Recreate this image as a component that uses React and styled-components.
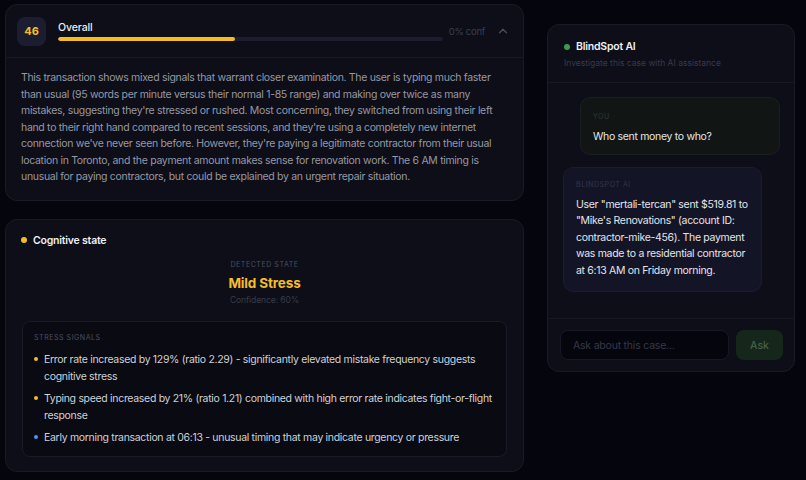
import React from "react";
import styled, { createGlobalStyle } from "styled-components";

const GlobalStyle = createGlobalStyle`
  html, body {
    margin: 0;
    padding: 0;
    background: #05050d;
  }
  body {
    font-family: Inter, "Noto Sans", sans-serif;
    -webkit-font-smoothing: antialiased;
  }
`;

const Page = styled.div`
  display: flex;
  align-items: flex-start;
  gap: 23px;
  padding: 4px 11px 10px 5px;
  width: 806px;
  height: 480px;
  box-sizing: border-box;
  overflow: hidden;
`;

const LeftColumn = styled.div`
  width: 519px;
  display: flex;
  flex-direction: column;
  gap: 18px;
`;

const Card = styled.section`
  background: #0d0e17;
  border: 1px solid #1a1b27;
  border-radius: 12px;
  box-sizing: border-box;
`;

const OverallHeader = styled.div`
  display: flex;
  align-items: center;
  height: 52px;
  padding: 0 13px 0 11px;
  border-bottom: 1px solid #181924;
`;

const ScoreBadge = styled.div`
  width: 29px;
  height: 29px;
  border-radius: 8px;
  background: #1c1d31;
  color: #f5bd2a;
  font-weight: 700;
  font-size: 11px;
  display: flex;
  align-items: center;
  justify-content: center;
  flex-shrink: 0;
`;

const OverallMain = styled.div`
  flex: 1;
  margin-left: 12px;
  display: flex;
  flex-direction: column;
  gap: 3px;
`;

const OverallLabel = styled.div`
  color: #eceef3;
  font-size: 10.5px;
  font-weight: 500;
  line-height: 13px;
  letter-spacing: -0.01em;
`;

const Track = styled.div`
  height: 4px;
  width: 385px;
  border-radius: 2px;
  background: #1c1d2e;
  overflow: hidden;
`;

const Fill = styled.div`
  height: 100%;
  border-radius: 2px;
  background: #f5bd1c;
`;

const Conf = styled.span`
  color: #3c3e4f;
  font-size: 9.5px;
  letter-spacing: -0.03em;
  margin-right: 11px;
`;

const Chevron = styled.svg`
  width: 14px;
  height: 14px;
  color: #4a4c5c;
`;

const Summary = styled.p`
  margin: 0;
  padding: 12px 14px 14px 15px;
  color: #9698a6;
  font-size: 10.5px;
  line-height: 16.5px;
  letter-spacing: -0.03em;
`;

const StateCard = styled(Card)`
  padding: 14px 15px 14px 15px;
`;

const SectionTitle = styled.div`
  display: flex;
  align-items: center;
  gap: 6px;
  color: #eceef3;
  font-size: 10.5px;
  font-weight: 600;
  letter-spacing: -0.02em;
`;

const Dot = styled.span`
  width: ${(p) => p.size || 6}px;
  height: ${(p) => p.size || 6}px;
  border-radius: 50%;
  background: ${(p) => p.color};
  flex-shrink: 0;
`;

const Detected = styled.div`
  display: flex;
  flex-direction: column;
  align-items: center;
  margin-top: 13px;
`;

const TinyLabel = styled.div`
  color: #4d4f60;
  font-size: 7px;
  letter-spacing: 0.08em;
  text-transform: uppercase;
  line-height: 10px;
`;

const StateName = styled.div`
  color: #f5bd2a;
  font-size: 13.5px;
  font-weight: 700;
  margin-top: 5px;
  line-height: 17px;
  letter-spacing: -0.01em;
`;

const StateConf = styled.div`
  color: #3a3c4c;
  font-size: 8.5px;
  margin-top: 3px;
  letter-spacing: -0.01em;
`;

const SignalsBox = styled.div`
  margin: 16px 1px 0;
  background: #090a12;
  border: 1px solid #1a1b27;
  border-radius: 8px;
  padding: 11px 11px 10px;
`;

const SignalList = styled.ul`
  list-style: none;
  margin: 8px 0 0;
  padding: 0;
  display: flex;
  flex-direction: column;
  gap: 5px;
`;

const Signal = styled.li`
  display: flex;
  gap: 6px;
  color: #cfd1d8;
  font-size: 10.5px;
  line-height: 17px;
  letter-spacing: -0.03em;

  ${Dot} {
    margin-top: 6.5px;
  }
`;

const ChatPanel = styled(Card)`
  margin-top: 20px;
  width: 248px;
  height: 348px;
  display: flex;
  flex-direction: column;
`;

const ChatHeader = styled.div`
  padding: 14px 16px 13px;
  border-bottom: 1px solid #171823;
`;

const ChatTitle = styled(SectionTitle)`
  line-height: 15px;
`;

const ChatSub = styled.div`
  color: #383a4d;
  font-size: 8.5px;
  margin-top: 3px;
  line-height: 12px;
`;

const Messages = styled.div`
  flex: 1;
  padding: 14px 14px 0 15px;
  display: flex;
  flex-direction: column;
  gap: 12px;
`;

const Bubble = styled.div`
  align-self: ${(p) => (p.mine ? "flex-end" : "flex-start")};
  width: ${(p) => (p.mine ? 200 : 199)}px;
  box-sizing: border-box;
  background: ${(p) => (p.mine ? "#111615" : "#141427")};
  border: 1px solid ${(p) => (p.mine ? "#1a201f" : "#1b1b31")};
  border-radius: 10px;
  padding: ${(p) => (p.mine ? "14px 12px 8px" : "12px 12px 11px")};
`;

const BubbleLabel = styled(TinyLabel)`
  color: ${(p) => p.color || "#3a3c4c"};
  margin-bottom: 7px;
`;

const BubbleText = styled.div`
  color: #e3e5ea;
  font-size: 10.5px;
  line-height: 16.6px;
  letter-spacing: -0.03em;
`;

const InputRow = styled.div`
  display: flex;
  gap: 7px;
  padding: 11px 11px 11px 12px;
  border-top: 1px solid #171823;
`;

const Input = styled.input`
  flex: 1;
  min-width: 0;
  height: 30px;
  box-sizing: border-box;
  background: #05050d;
  border: 1px solid #171823;
  border-radius: 8px;
  padding: 0 12px;
  color: #e3e5ea;
  font-family: inherit;
  font-size: 10.5px;
  letter-spacing: -0.02em;
  outline: none;

  &::placeholder {
    color: #363848;
  }
`;

const AskButton = styled.button`
  width: 47px;
  height: 30px;
  border: none;
  border-radius: 8px;
  background: #14271a;
  color: #466048;
  font-family: inherit;
  font-size: 10.5px;
  font-weight: 500;
`;

const signals = [
  {
    color: "#f5bd1c",
    text: "Error rate increased by 129% (ratio 2.29) - significantly elevated mistake frequency suggests cognitive stress",
  },
  {
    color: "#f5bd1c",
    text: "Typing speed increased by 21% (ratio 1.21) combined with high error rate indicates fight-or-flight response",
  },
  {
    color: "#5b8def",
    text: "Early morning transaction at 06:13 - unusual timing that may indicate urgency or pressure",
  },
];

export default function App() {
  const score = 46;
  return (
    <>
      <GlobalStyle />
      <Page>
        <LeftColumn>
          <Card>
            <OverallHeader>
              <ScoreBadge>{score}</ScoreBadge>
              <OverallMain>
                <OverallLabel>Overall</OverallLabel>
                <Track>
                  <Fill style={{ width: `${score}%` }} />
                </Track>
              </OverallMain>
              <Conf>0% conf</Conf>
              <Chevron viewBox="0 0 24 24" fill="none" stroke="currentColor" strokeWidth="2.2" strokeLinecap="round" strokeLinejoin="round">
                <path d="M6 15l6-6 6 6" />
              </Chevron>
            </OverallHeader>
            <Summary>
              This transaction shows mixed signals that warrant closer examination. The user is typing much faster than usual (95 words per minute versus their normal 1-85 range) and making over twice as many mistakes, suggesting they're stressed or rushed. Most concerning, they switched from using their left hand to their right hand compared to recent sessions, and they're using a completely new internet connection we've never seen before. However, they're paying a legitimate contractor from their usual location in Toronto, and the payment amount makes sense for renovation work. The 6 AM timing is unusual for paying contractors, but could be explained by an urgent repair situation.
            </Summary>
          </Card>

          <StateCard>
            <SectionTitle>
              <Dot color="#f5bd1c" />
              Cognitive state
            </SectionTitle>
            <Detected>
              <TinyLabel>Detected state</TinyLabel>
              <StateName>Mild Stress</StateName>
              <StateConf>Confidence: 60%</StateConf>
            </Detected>
            <SignalsBox>
              <TinyLabel>Stress signals</TinyLabel>
              <SignalList>
                {signals.map((s, i) => (
                  <Signal key={i}>
                    <Dot color={s.color} size={4} />
                    <span>{s.text}</span>
                  </Signal>
                ))}
              </SignalList>
            </SignalsBox>
          </StateCard>
        </LeftColumn>

        <ChatPanel as="aside">
          <ChatHeader>
            <ChatTitle>
              <Dot color="#3f9a4c" />
              BlindSpot AI
            </ChatTitle>
            <ChatSub>Investigate this case with AI assistance</ChatSub>
          </ChatHeader>
          <Messages>
            <Bubble mine>
              <BubbleLabel color="#2f3836">You</BubbleLabel>
              <BubbleText>Who sent money to who?</BubbleText>
            </Bubble>
            <Bubble>
              <BubbleLabel color="#35364d">BlindSpot AI</BubbleLabel>
              <BubbleText>
                User "mertali-tercan" sent $519.81 to "Mike's Renovations" (account ID: contractor-mike-456). The payment was made to a residential contractor at 6:13 AM on Friday morning.
              </BubbleText>
            </Bubble>
          </Messages>
          <InputRow>
            <Input placeholder="Ask about this case..." />
            <AskButton>Ask</AskButton>
          </InputRow>
        </ChatPanel>
      </Page>
    </>
  );
}
